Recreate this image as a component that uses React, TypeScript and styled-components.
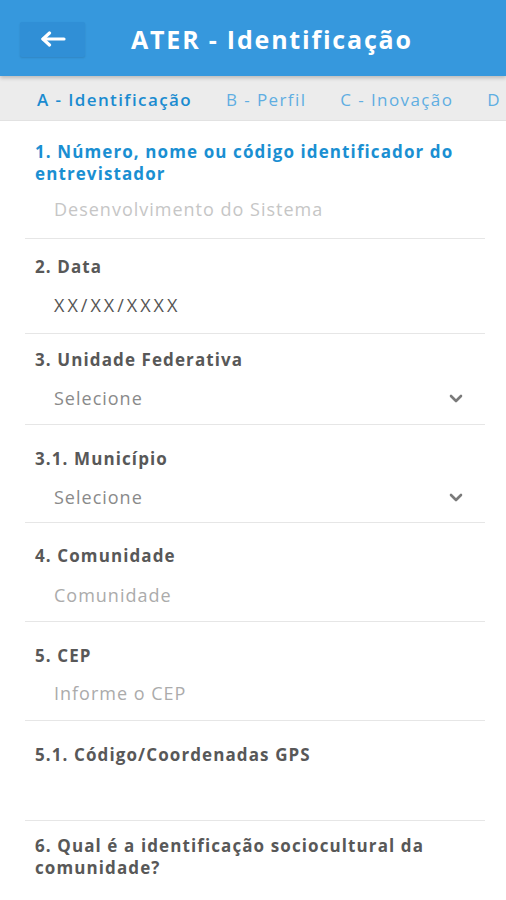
import React from "react";
import styled, { createGlobalStyle } from "styled-components";

const Global = createGlobalStyle`
  html, body { margin: 0; padding: 0; background: #ffffff; }
  body { font-family: "Open Sans", "Liberation Sans", sans-serif; }
  * { box-sizing: border-box; }
`;

const Page = styled.div`
  width: 506px;
  height: 900px;
  overflow: hidden;
  background: #ffffff;
  display: flex;
  flex-direction: column;
`;

const Header = styled.header`
  position: relative;
  z-index: 2;
  height: 76px;
  background: #3698dd;
  display: flex;
  align-items: center;
  padding: 0 20px;
  box-shadow: 0 2px 4px rgba(0, 0, 0, 0.22);
`;

const BackButton = styled.button`
  width: 65px;
  height: 35px;
  margin-top: 2px;
  border: none;
  border-radius: 2px;
  background: #308fd6;
  box-shadow: 0 1px 2px rgba(0, 0, 0, 0.12);
  display: flex;
  align-items: center;
  justify-content: center;
  padding: 0;
  cursor: pointer;
`;

const Title = styled.h1`
  margin: 2px 0 0 46px;
  color: #ffffff;
  font-size: 25px;
  font-weight: 700;
  letter-spacing: 1.8px;
  white-space: nowrap;
`;

const TabBar = styled.nav`
  height: 45px;
  background: #ececec;
  border-bottom: 1px solid #e2e2e2;
  display: flex;
  align-items: center;
  gap: 34px;
  padding: 2px 0 0 37px;
  overflow: hidden;
  white-space: nowrap;
`;

const Tab = styled.span<{ $active?: boolean }>`
  font-size: 17px;
  letter-spacing: 1.4px;
  font-weight: ${(p) => (p.$active ? 600 : 400)};
  color: ${(p) => (p.$active ? "#1a8bd0" : "#5faee2")};
  flex: none;
`;

const Form = styled.main`
  padding: 0 21px 0 25px;
`;

const Field = styled.section<{ $pt: number; $gap: number; $pb: number }>`
  padding: ${(p) => p.$pt}px 0 ${(p) => p.$pb}px;
  display: flex;
  flex-direction: column;
  gap: ${(p) => p.$gap}px;
  & + & {
    border-top: 1px solid #e6e6e6;
  }
`;

const Label = styled.div<{ $active?: boolean }>`
  padding-left: 10px;
  font-size: 17px;
  line-height: 22px;
  font-weight: 700;
  letter-spacing: 1.1px;
  color: ${(p) => (p.$active ? "#1a8fd2" : "#585858")};
`;

const ValueRow = styled.div`
  height: 22px;
  padding: 0 22px 0 29px;
  display: flex;
  align-items: center;
  justify-content: space-between;
`;

const Value = styled.span<{ $tone: string; $wide?: boolean }>`
  font-size: 18px;
  line-height: 22px;
  letter-spacing: ${(p) => (p.$wide ? "3px" : "1px")};
  color: ${(p) => p.$tone};
`;

const Arrow = () => (
  <svg width="26" height="16" viewBox="0 0 26 16" fill="none">
    <path d="M3 8 H24" stroke="#fff" strokeWidth="3.2" strokeLinecap="round" />
    <path d="M9.5 2 L3 8 L9.5 14" stroke="#fff" strokeWidth="3.2" strokeLinecap="round" strokeLinejoin="round" />
  </svg>
);

const Chevron = () => (
  <svg width="14" height="9" viewBox="0 0 14 9" fill="none">
    <path d="M2 2 L7 7 L12 2" stroke="#7a7a7a" strokeWidth="2.6" strokeLinecap="round" strokeLinejoin="round" />
  </svg>
);

type F = {
  label: string;
  value?: string;
  tone?: string;
  select?: boolean;
  active?: boolean;
  wide?: boolean;
  pt: number;
  gap: number;
  pb: number;
  noValue?: boolean;
};

const fields: F[] = [
  { label: "1. Número, nome ou código identificador do entrevistador", value: "Desenvolvimento do Sistema", tone: "#c6c6c6", active: true, pt: 20, gap: 13, pb: 18 },
  { label: "2. Data", value: "XX/XX/XXXX", tone: "#555555", wide: true, pt: 17, gap: 16, pb: 17 },
  { label: "3. Unidade Federativa", value: "Selecione", tone: "#8a8a8a", select: true, pt: 15, gap: 16, pb: 15 },
  { label: "3.1. Município", value: "Selecione", tone: "#8a8a8a", select: true, pt: 23, gap: 16, pb: 14 },
  { label: "4. Comunidade", value: "Comunidade", tone: "#ababab", pt: 22, gap: 17, pb: 15 },
  { label: "5. CEP", value: "Informe o CEP", tone: "#ababab", pt: 23, gap: 15, pb: 16 },
  { label: "5.1. Código/Coordenadas GPS", value: "", tone: "#ababab", pt: 23, gap: 16, pb: 16 },
  { label: "6. Qual é a identificação sociocultural da comunidade?", pt: 14, gap: 16, pb: 15, noValue: true },
];

export default function App() {
  return (
    <Page>
      <Global />
      <Header>
        <BackButton aria-label="Voltar">
          <Arrow />
        </BackButton>
        <Title>ATER - Identificação</Title>
      </Header>
      <TabBar>
        <Tab $active>A - Identificação</Tab>
        <Tab>B - Perfil</Tab>
        <Tab>C - Inovação</Tab>
        <Tab>D - Produção</Tab>
      </TabBar>
      <Form>
        {fields.map((f) => (
          <Field key={f.label} $pt={f.pt} $gap={f.gap} $pb={f.pb}>
            <Label $active={f.active}>{f.label}</Label>
            {!f.noValue && (
              <ValueRow>
                <Value $tone={f.tone || "#aaa"} $wide={f.wide}>{f.value}</Value>
                {f.select && <Chevron />}
              </ValueRow>
            )}
          </Field>
        ))}
      </Form>
    </Page>
  );
}
